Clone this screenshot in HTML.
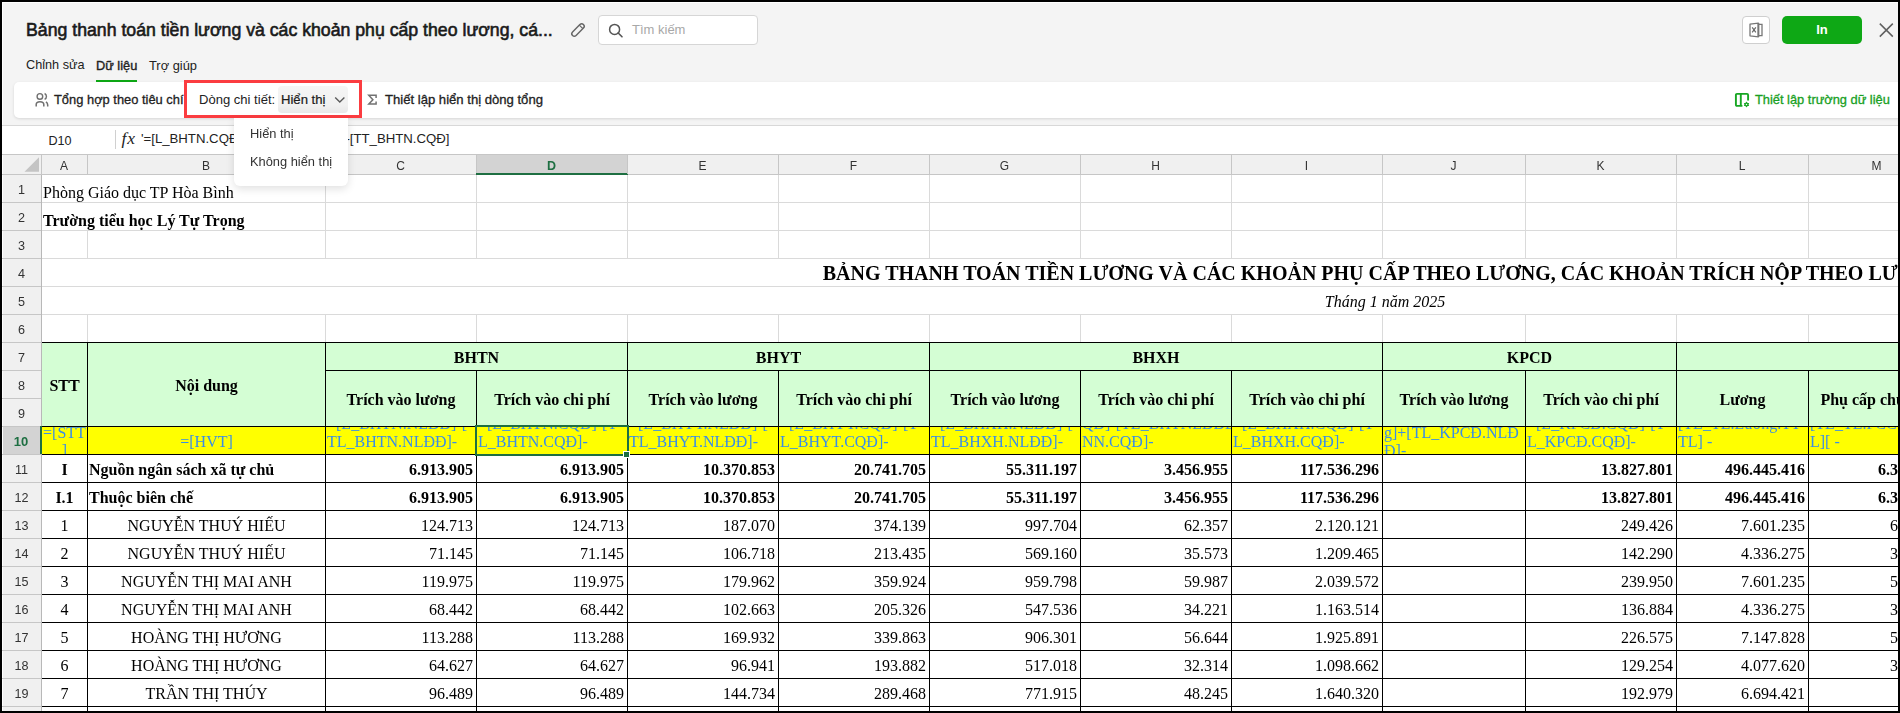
<domain style="display:none">Computer-Use</domain>
<!DOCTYPE html><html><head><meta charset="utf-8"><style>
*{margin:0;padding:0;box-sizing:border-box}
html,body{width:1900px;height:713px;overflow:hidden;background:#f4f4f4;position:relative}
div{position:absolute}
.ui{font-family:"Liberation Sans",sans-serif;white-space:nowrap}
.c{font-family:"Liberation Serif",serif;font-size:16px;color:#000;white-space:nowrap;overflow:hidden;display:flex;align-items:center;line-height:17px;padding-top:2px}
.b{font-weight:bold}
.ctr{justify-content:center}
.rt{justify-content:flex-end;padding-right:3px}
.lf{justify-content:flex-start;padding-left:1px}
.hd{font-family:"Liberation Sans",sans-serif;font-size:12px;color:#333;display:flex;align-items:center;justify-content:center;white-space:nowrap;line-height:14px}
.f10{font-family:"Liberation Serif",serif;font-size:16px;color:#3a8ee6;line-height:17.7px;overflow:hidden;display:flex;align-items:center;white-space:nowrap;padding-top:2px}
.f10 span{display:block}
.c,.f10,.hd{will-change:transform}
</style></head><body><div style="left:2px;top:2px;width:1896px;height:1px;background:#fff"></div>
<div style="left:2px;top:2px;width:1px;height:709px;background:#fff"></div>
<div class="ui" style="left:26px;top:18px;width:560px;height:24px;font-size:17.7px;color:#1a1a1a;-webkit-text-stroke:0.6px #1a1a1a;line-height:24px">Bảng thanh toán tiền lương và các khoản phụ cấp theo lương, cá...</div>
<svg style="position:absolute;left:560px;top:10px" width="30" height="30" viewBox="0 0 30 30"><g transform="rotate(-45 18 20)"><rect x="10.3" y="17.5" width="15.4" height="5" rx="2.5" fill="none" stroke="#666" stroke-width="1.45"/><path d="M22.4 17.5 V22.5" stroke="#666" stroke-width="1.2"/></g></svg>
<div style="left:598px;top:15px;width:160px;height:30px;background:#fff;border:1px solid #d6d6d6;border-radius:4px"></div>
<svg style="position:absolute;left:608px;top:22.5px" width="16" height="15" viewBox="0 0 16 15"><circle cx="6.6" cy="6.4" r="5" fill="none" stroke="#555" stroke-width="1.5"/><path d="M10.2 10 L14 13.8" stroke="#555" stroke-width="1.6" stroke-linecap="round"/></svg>
<div class="ui" style="left:632px;top:21px;width:100px;height:18px;font-size:13px;color:#a8a8a8;line-height:18px">Tìm kiếm</div>
<div style="left:1742px;top:16px;width:28px;height:28px;background:#fff;border:1px solid #cfcfcf;border-radius:4px"></div>
<svg style="position:absolute;left:1740px;top:14px" width="32" height="32" viewBox="0 0 32 32"><path d="M10 10.2 L18.4 9.2 L18.4 22.8 L10 21.8 Z" fill="none" stroke="#777" stroke-width="1.3" stroke-linejoin="round"/><path d="M18.4 9.2 V22.8" stroke="#777" stroke-width="1.9"/><path d="M18.4 10.4 H22 V21.6 H18.4" fill="none" stroke="#777" stroke-width="1.3"/><path d="M12.2 13.3 L15.8 18.3 M15.8 13.3 L12.2 18.3" stroke="#666" stroke-width="1.2"/></svg>
<div class="ui" style="left:1782px;top:16px;width:80px;height:28px;background:#0ea815;border-radius:5px;color:#fff;font-size:13px;font-weight:bold;display:flex;align-items:center;justify-content:center;padding-bottom:2px">In</div>
<svg style="position:absolute;left:1877.6px;top:22px" width="16" height="16" viewBox="0 0 16 16"><path d="M1.8 1.6 L14.8 14.6 M14.8 1.6 L1.8 14.6" stroke="#606060" stroke-width="1.5"/></svg>
<div class="ui" style="left:26px;top:57px;width:70px;height:17px;font-size:12.7px;color:#222;line-height:17px">Chỉnh sửa</div>
<div class="ui" style="left:96px;top:57px;width:45px;height:17px;font-size:12.8px;color:#222;line-height:17px;-webkit-text-stroke:0.35px #222">Dữ liệu</div>
<div class="ui" style="left:149px;top:57px;width:60px;height:17px;font-size:12.85px;color:#222;line-height:17px">Trợ giúp</div>
<div style="left:96px;top:80px;width:41px;height:2px;background:#0ea815"></div>
<div style="left:14px;top:82px;width:1890px;height:36px;background:#fff;border-radius:5px;box-shadow:0 1px 3px rgba(0,0,0,0.12)"></div>
<svg style="position:absolute;left:28px;top:86px" width="30" height="28" viewBox="0 0 30 28"><circle cx="11.9" cy="10.4" r="2.8" fill="none" stroke="#707070" stroke-width="1.4"/><path d="M8.2 20.6 V18.6 Q8.2 15.8 12 15.8 Q15.8 15.8 15.8 18.6 V20.6" fill="none" stroke="#707070" stroke-width="1.5"/><path d="M16.6 7.5 A3.2 3.2 0 0 1 16.6 13.3" fill="none" stroke="#707070" stroke-width="1.4"/><path d="M17.9 15.9 Q19.7 16.9 19.7 19 V20.6" fill="none" stroke="#707070" stroke-width="1.5"/></svg>
<div class="ui" style="left:54px;top:91px;width:135px;height:17px;font-size:12.9px;color:#222;line-height:17px;-webkit-text-stroke:0.3px #222">Tổng hợp theo tiêu chí</div>
<div style="left:278px;top:86px;width:70px;height:27px;background:linear-gradient(#f5f5f5,#f1f1f1 70%,#e8e8e8);border-radius:4px"></div>
<div class="ui" style="left:199px;top:91px;width:80px;height:17px;font-size:13.05px;color:#222;line-height:17px">Dòng chi tiết:</div>
<div class="ui" style="left:281px;top:91px;width:50px;height:17px;font-size:13.1px;color:#1a1a1a;line-height:17px;-webkit-text-stroke:0.2px #1a1a1a">Hiển thị</div>
<svg style="position:absolute;left:326px;top:88px" width="26" height="24" viewBox="0 0 26 24"><path d="M9.2 9.6 L13.8 14.1 L18.4 9.6" fill="none" stroke="#5a5a5a" stroke-width="1.35"/></svg>
<div style="left:184px;top:80px;width:178px;height:38px;border:3.8px solid #fb3c40"></div>
<svg style="position:absolute;left:362px;top:88px" width="30" height="24" viewBox="0 0 30 24"><path d="M14.1 9.9 V7.3 H6.8 L10.9 11.7 L6.8 16.1 H14.1 V13.5" fill="none" stroke="#727272" stroke-width="1.5" stroke-linejoin="miter"/></svg>
<div class="ui" style="left:385px;top:91px;width:170px;height:17px;font-size:13.1px;color:#222;line-height:17px;-webkit-text-stroke:0.3px #222">Thiết lập hiển thị dòng tổng</div>
<svg style="position:absolute;left:1730px;top:88px" width="26" height="24" viewBox="0 0 26 24"><path d="M12.4 17.9 H7 Q5.9 17.9 5.9 16.8 V7 Q5.9 5.9 7 5.9 H17 Q18.1 5.9 18.1 7 V12.4" fill="none" stroke="#17a623" stroke-width="1.9"/><path d="M10.8 5.9 V17.9" stroke="#17a623" stroke-width="1.9"/><path d="M16.5 13.4 L19.2 18.1 L13.8 18.1 Z M16.5 19.6 L19.2 14.9 L13.8 14.9 Z" fill="#17a623"/><circle cx="16.5" cy="16.5" r="2.1" fill="#17a623"/><circle cx="16.5" cy="16.5" r="0.75" fill="#fff"/></svg>
<div class="ui" style="left:1755px;top:91px;width:140px;height:17px;font-size:12.85px;color:#18a023;line-height:17px;-webkit-text-stroke:0.3px #18a023">Thiết lập trường dữ liệu</div>
<div style="left:3px;top:125px;width:1895px;height:30px;background:#fff"></div>
<div style="left:2px;top:125px;width:1896px;height:1px;background:#d8d8d8"></div>
<div class="ui" style="left:48.5px;top:134px;width:40px;height:15px;font-size:12.6px;color:#222;line-height:15px">D10</div>
<div style="left:115px;top:130px;width:1px;height:19px;background:#d0d0d0"></div>
<div style="left:121.5px;top:127.5px;width:22px;height:20px;font-family:'Liberation Serif',serif;font-style:italic;font-size:17.5px;color:#222;line-height:20px;letter-spacing:0.8px">fx</div>
<div class="ui" style="left:141px;top:130px;width:400px;height:17px;font-size:13.2px;color:#222;line-height:17px">'=[L_BHTN.CQĐ]-[TL_BHTN.CQĐ]-[TT_BHTN.CQĐ]</div>
<div style="left:3px;top:154px;width:1895px;height:21px;background:#f0f0f0"></div>
<div style="left:2px;top:154px;width:1896px;height:1px;background:#c6c6c6"></div>
<div style="left:2px;top:174px;width:1896px;height:1px;background:#c6c6c6"></div>
<svg style="position:absolute;left:24px;top:157px" width="16" height="15" viewBox="0 0 16 15"><path d="M0.5 14.7 L15 14.7 L15 0.3 Z" fill="#c4c4c4"/></svg>
<div class="hd" style="left:41px;top:155px;width:46px;height:19px;padding-top:2px">A</div>
<div style="left:87px;top:155px;width:1px;height:19px;background:#c6c6c6"></div>
<div class="hd" style="left:87px;top:155px;width:238px;height:19px;padding-top:2px">B</div>
<div style="left:325px;top:155px;width:1px;height:19px;background:#c6c6c6"></div>
<div class="hd" style="left:325px;top:155px;width:151px;height:19px;padding-top:2px">C</div>
<div style="left:476px;top:155px;width:1px;height:19px;background:#c6c6c6"></div>
<div style="left:477px;top:155px;width:150px;height:19px;background:#d3d3d3"></div>
<div style="left:476px;top:173px;width:152px;height:2px;background:#1e6f42"></div>
<div class="hd" style="left:476px;top:155px;width:151px;height:19px;font-weight:bold;color:#1e6f42;padding-top:2px;font-size:12.5px">D</div>
<div style="left:627px;top:155px;width:1px;height:19px;background:#c6c6c6"></div>
<div class="hd" style="left:627px;top:155px;width:151px;height:19px;padding-top:2px">E</div>
<div style="left:778px;top:155px;width:1px;height:19px;background:#c6c6c6"></div>
<div class="hd" style="left:778px;top:155px;width:151px;height:19px;padding-top:2px">F</div>
<div style="left:929px;top:155px;width:1px;height:19px;background:#c6c6c6"></div>
<div class="hd" style="left:929px;top:155px;width:151px;height:19px;padding-top:2px">G</div>
<div style="left:1080px;top:155px;width:1px;height:19px;background:#c6c6c6"></div>
<div class="hd" style="left:1080px;top:155px;width:151px;height:19px;padding-top:2px">H</div>
<div style="left:1231px;top:155px;width:1px;height:19px;background:#c6c6c6"></div>
<div class="hd" style="left:1231px;top:155px;width:151px;height:19px;padding-top:2px">I</div>
<div style="left:1382px;top:155px;width:1px;height:19px;background:#c6c6c6"></div>
<div class="hd" style="left:1382px;top:155px;width:143px;height:19px;padding-top:2px">J</div>
<div style="left:1525px;top:155px;width:1px;height:19px;background:#c6c6c6"></div>
<div class="hd" style="left:1525px;top:155px;width:151px;height:19px;padding-top:2px">K</div>
<div style="left:1676px;top:155px;width:1px;height:19px;background:#c6c6c6"></div>
<div class="hd" style="left:1676px;top:155px;width:132px;height:19px;padding-top:2px">L</div>
<div style="left:1808px;top:155px;width:1px;height:19px;background:#c6c6c6"></div>
<div class="hd" style="left:1808px;top:155px;width:137px;height:19px;padding-top:2px">M</div>
<div style="left:1945px;top:155px;width:1px;height:19px;background:#c6c6c6"></div>
<div style="left:41px;top:155px;width:1px;height:20px;background:#c6c6c6"></div>
<div style="left:42px;top:175px;width:1856px;height:540px;background:#fff"></div>
<div style="left:3px;top:175px;width:38px;height:540px;background:#f0f0f0"></div>
<div style="left:41px;top:175px;width:1px;height:538px;background:#b8b8b8"></div>
<div class="hd" style="left:2px;top:174px;width:39px;height:28px;padding-top:4px;font-size:12.6px">1</div>
<div style="left:2px;top:202px;width:39px;height:1px;background:#c6c6c6"></div>
<div class="hd" style="left:2px;top:202px;width:39px;height:28px;padding-top:4px;font-size:12.6px">2</div>
<div style="left:2px;top:230px;width:39px;height:1px;background:#c6c6c6"></div>
<div class="hd" style="left:2px;top:230px;width:39px;height:28px;padding-top:4px;font-size:12.6px">3</div>
<div style="left:2px;top:258px;width:39px;height:1px;background:#c6c6c6"></div>
<div class="hd" style="left:2px;top:258px;width:39px;height:28px;padding-top:4px;font-size:12.6px">4</div>
<div style="left:2px;top:286px;width:39px;height:1px;background:#c6c6c6"></div>
<div class="hd" style="left:2px;top:286px;width:39px;height:28px;padding-top:4px;font-size:12.6px">5</div>
<div style="left:2px;top:314px;width:39px;height:1px;background:#c6c6c6"></div>
<div class="hd" style="left:2px;top:314px;width:39px;height:28px;padding-top:4px;font-size:12.6px">6</div>
<div style="left:2px;top:342px;width:39px;height:1px;background:#c6c6c6"></div>
<div class="hd" style="left:2px;top:342px;width:39px;height:28px;padding-top:4px;font-size:12.6px">7</div>
<div style="left:2px;top:370px;width:39px;height:1px;background:#c6c6c6"></div>
<div class="hd" style="left:2px;top:370px;width:39px;height:28px;padding-top:4px;font-size:12.6px">8</div>
<div style="left:2px;top:398px;width:39px;height:1px;background:#c6c6c6"></div>
<div class="hd" style="left:2px;top:398px;width:39px;height:28px;padding-top:4px;font-size:12.6px">9</div>
<div style="left:2px;top:426px;width:39px;height:1px;background:#c6c6c6"></div>
<div style="left:3px;top:427px;width:37px;height:27px;background:#d3d3d3"></div>
<div class="hd" style="left:2px;top:426px;width:38px;height:28px;font-weight:bold;color:#1e6f42;font-size:13px;padding-top:4px">10</div>
<div style="left:40px;top:426px;width:2px;height:28px;background:#1e6f42"></div>
<div style="left:2px;top:454px;width:39px;height:1px;background:#c6c6c6"></div>
<div class="hd" style="left:2px;top:454px;width:39px;height:28px;padding-top:4px;font-size:12.6px">11</div>
<div style="left:2px;top:482px;width:39px;height:1px;background:#c6c6c6"></div>
<div class="hd" style="left:2px;top:482px;width:39px;height:28px;padding-top:4px;font-size:12.6px">12</div>
<div style="left:2px;top:510px;width:39px;height:1px;background:#c6c6c6"></div>
<div class="hd" style="left:2px;top:510px;width:39px;height:28px;padding-top:4px;font-size:12.6px">13</div>
<div style="left:2px;top:538px;width:39px;height:1px;background:#c6c6c6"></div>
<div class="hd" style="left:2px;top:538px;width:39px;height:28px;padding-top:4px;font-size:12.6px">14</div>
<div style="left:2px;top:566px;width:39px;height:1px;background:#c6c6c6"></div>
<div class="hd" style="left:2px;top:566px;width:39px;height:28px;padding-top:4px;font-size:12.6px">15</div>
<div style="left:2px;top:594px;width:39px;height:1px;background:#c6c6c6"></div>
<div class="hd" style="left:2px;top:594px;width:39px;height:28px;padding-top:4px;font-size:12.6px">16</div>
<div style="left:2px;top:622px;width:39px;height:1px;background:#c6c6c6"></div>
<div class="hd" style="left:2px;top:622px;width:39px;height:28px;padding-top:4px;font-size:12.6px">17</div>
<div style="left:2px;top:650px;width:39px;height:1px;background:#c6c6c6"></div>
<div class="hd" style="left:2px;top:650px;width:39px;height:28px;padding-top:4px;font-size:12.6px">18</div>
<div style="left:2px;top:678px;width:39px;height:1px;background:#c6c6c6"></div>
<div class="hd" style="left:2px;top:678px;width:39px;height:28px;padding-top:4px;font-size:12.6px">19</div>
<div style="left:2px;top:706px;width:39px;height:1px;background:#c6c6c6"></div>
<div class="hd" style="left:2px;top:706px;width:39px;height:28px;padding-top:4px;font-size:12.6px">20</div>
<div style="left:2px;top:734px;width:39px;height:1px;background:#c6c6c6"></div>
<div style="left:42px;top:202px;width:1856px;height:1px;background:#dadada"></div>
<div style="left:42px;top:230px;width:1856px;height:1px;background:#dadada"></div>
<div style="left:42px;top:258px;width:1856px;height:1px;background:#dadada"></div>
<div style="left:42px;top:286px;width:1856px;height:1px;background:#dadada"></div>
<div style="left:42px;top:314px;width:1856px;height:1px;background:#dadada"></div>
<div style="left:42px;top:342px;width:1856px;height:1px;background:#dadada"></div>
<div style="left:325px;top:175px;width:1px;height:27px;background:#dadada"></div>
<div style="left:476px;top:175px;width:1px;height:27px;background:#dadada"></div>
<div style="left:627px;top:175px;width:1px;height:27px;background:#dadada"></div>
<div style="left:778px;top:175px;width:1px;height:27px;background:#dadada"></div>
<div style="left:929px;top:175px;width:1px;height:27px;background:#dadada"></div>
<div style="left:1080px;top:175px;width:1px;height:27px;background:#dadada"></div>
<div style="left:1231px;top:175px;width:1px;height:27px;background:#dadada"></div>
<div style="left:1382px;top:175px;width:1px;height:27px;background:#dadada"></div>
<div style="left:1525px;top:175px;width:1px;height:27px;background:#dadada"></div>
<div style="left:1676px;top:175px;width:1px;height:27px;background:#dadada"></div>
<div style="left:1808px;top:175px;width:1px;height:27px;background:#dadada"></div>
<div style="left:325px;top:203px;width:1px;height:27px;background:#dadada"></div>
<div style="left:476px;top:203px;width:1px;height:27px;background:#dadada"></div>
<div style="left:627px;top:203px;width:1px;height:27px;background:#dadada"></div>
<div style="left:778px;top:203px;width:1px;height:27px;background:#dadada"></div>
<div style="left:929px;top:203px;width:1px;height:27px;background:#dadada"></div>
<div style="left:1080px;top:203px;width:1px;height:27px;background:#dadada"></div>
<div style="left:1231px;top:203px;width:1px;height:27px;background:#dadada"></div>
<div style="left:1382px;top:203px;width:1px;height:27px;background:#dadada"></div>
<div style="left:1525px;top:203px;width:1px;height:27px;background:#dadada"></div>
<div style="left:1676px;top:203px;width:1px;height:27px;background:#dadada"></div>
<div style="left:1808px;top:203px;width:1px;height:27px;background:#dadada"></div>
<div style="left:87px;top:231px;width:1px;height:27px;background:#dadada"></div>
<div style="left:325px;top:231px;width:1px;height:27px;background:#dadada"></div>
<div style="left:476px;top:231px;width:1px;height:27px;background:#dadada"></div>
<div style="left:627px;top:231px;width:1px;height:27px;background:#dadada"></div>
<div style="left:778px;top:231px;width:1px;height:27px;background:#dadada"></div>
<div style="left:929px;top:231px;width:1px;height:27px;background:#dadada"></div>
<div style="left:1080px;top:231px;width:1px;height:27px;background:#dadada"></div>
<div style="left:1231px;top:231px;width:1px;height:27px;background:#dadada"></div>
<div style="left:1382px;top:231px;width:1px;height:27px;background:#dadada"></div>
<div style="left:1525px;top:231px;width:1px;height:27px;background:#dadada"></div>
<div style="left:1676px;top:231px;width:1px;height:27px;background:#dadada"></div>
<div style="left:1808px;top:231px;width:1px;height:27px;background:#dadada"></div>
<div style="left:87px;top:315px;width:1px;height:27px;background:#dadada"></div>
<div style="left:325px;top:315px;width:1px;height:27px;background:#dadada"></div>
<div style="left:476px;top:315px;width:1px;height:27px;background:#dadada"></div>
<div style="left:627px;top:315px;width:1px;height:27px;background:#dadada"></div>
<div style="left:778px;top:315px;width:1px;height:27px;background:#dadada"></div>
<div style="left:929px;top:315px;width:1px;height:27px;background:#dadada"></div>
<div style="left:1080px;top:315px;width:1px;height:27px;background:#dadada"></div>
<div style="left:1231px;top:315px;width:1px;height:27px;background:#dadada"></div>
<div style="left:1382px;top:315px;width:1px;height:27px;background:#dadada"></div>
<div style="left:1525px;top:315px;width:1px;height:27px;background:#dadada"></div>
<div style="left:1676px;top:315px;width:1px;height:27px;background:#dadada"></div>
<div style="left:1808px;top:315px;width:1px;height:27px;background:#dadada"></div>
<div style="left:42px;top:342px;width:1856px;height:84px;background:#d4fed4"></div>
<div style="left:42px;top:426px;width:1856px;height:28px;background:#ffff00"></div>
<div class="c lf" style="left:42px;top:175px;width:300px;height:27px;align-items:flex-end;padding-top:0;padding-bottom:0.8px;overflow:visible">Phòng Giáo dục TP Hòa Bình</div>
<div class="c lf b" style="left:42px;top:203px;width:300px;height:27px;align-items:flex-end;padding-top:0;padding-bottom:0.8px;overflow:visible">Trường tiểu học Lý Tự Trọng</div>
<div class="c ctr b" style="left:198px;top:259px;width:2370px;height:27px;font-size:20px">BẢNG THANH TOÁN TIỀN LƯƠNG VÀ CÁC KHOẢN PHỤ CẤP THEO LƯƠNG, CÁC KHOẢN TRÍCH NỘP THEO LƯƠNG</div>
<div class="c ctr" style="left:200px;top:287px;width:2370px;height:27px;font-style:italic">Tháng 1 năm 2025</div>
<div class="c ctr b" style="left:42px;top:343px;width:45px;height:83px;">STT</div>
<div class="c ctr b" style="left:88px;top:343px;width:237px;height:83px;">Nội dung</div>
<div class="c ctr b" style="left:326px;top:343px;width:301px;height:27px;">BHTN</div>
<div class="c ctr b" style="left:628px;top:343px;width:301px;height:27px;">BHYT</div>
<div class="c ctr b" style="left:930px;top:343px;width:452px;height:27px;">BHXH</div>
<div class="c ctr b" style="left:1383px;top:343px;width:293px;height:27px;">KPCD</div>
<div class="c ctr b" style="left:326px;top:371px;width:150px;height:55px;">Trích vào lương</div>
<div class="c ctr b" style="left:477px;top:371px;width:150px;height:55px;">Trích vào chi phí</div>
<div class="c ctr b" style="left:628px;top:371px;width:150px;height:55px;">Trích vào lương</div>
<div class="c ctr b" style="left:779px;top:371px;width:150px;height:55px;">Trích vào chi phí</div>
<div class="c ctr b" style="left:930px;top:371px;width:150px;height:55px;">Trích vào lương</div>
<div class="c ctr b" style="left:1081px;top:371px;width:150px;height:55px;">Trích vào chi phí</div>
<div class="c ctr b" style="left:1232px;top:371px;width:150px;height:55px;">Trích vào chi phí</div>
<div class="c ctr b" style="left:1383px;top:371px;width:142px;height:55px;">Trích vào lương</div>
<div class="c ctr b" style="left:1526px;top:371px;width:150px;height:55px;">Trích vào chi phí</div>
<div class="c ctr b" style="left:1677px;top:371px;width:131px;height:55px;">Lương</div>
<div class="c ctr b" style="left:1809px;top:371px;width:136px;height:55px;">Phụ cấp chức vụ</div>
<div class="f10" style="left:42px;top:427px;width:45px;height:27px;text-align:center"><div style="position:relative;width:100%;"><span>=[STT</span><span>]</span></div></div>
<div class="f10" style="left:88px;top:427px;width:237px;height:27px;text-align:center"><div style="position:relative;width:100%;"><span>=[HVT]</span></div></div>
<div class="f10" style="left:326px;top:427px;width:150px;height:27px;text-align:left"><div style="position:relative;width:100%;padding-left:1px"><span>=[L_BHTN.NLĐĐ]-[</span><span>TL_BHTN.NLĐĐ]-</span><span>&nbsp;</span></div></div>
<div class="f10" style="left:477px;top:427px;width:150px;height:27px;text-align:left"><div style="position:relative;width:100%;padding-left:1px"><span>=[L_BHTN.CQĐ]-[T</span><span>L_BHTN.CQĐ]-</span><span>&nbsp;</span></div></div>
<div class="f10" style="left:628px;top:427px;width:150px;height:27px;text-align:left"><div style="position:relative;width:100%;padding-left:1px"><span>=[L_BHYT.NLĐĐ]-[</span><span>TL_BHYT.NLĐĐ]-</span><span>&nbsp;</span></div></div>
<div class="f10" style="left:779px;top:427px;width:150px;height:27px;text-align:left"><div style="position:relative;width:100%;padding-left:1px"><span>=[L_BHYT.CQĐ]-[T</span><span>L_BHYT.CQĐ]-</span><span>&nbsp;</span></div></div>
<div class="f10" style="left:930px;top:427px;width:150px;height:27px;text-align:left"><div style="position:relative;width:100%;padding-left:1px"><span>=[L_BHXH.NLĐĐ]-[</span><span>TL_BHXH.NLĐĐ]-</span><span>&nbsp;</span></div></div>
<div class="f10" style="left:1081px;top:427px;width:150px;height:27px;text-align:left"><div style="position:relative;width:100%;padding-left:1px"><span>QĐ]-[TL_BHTNLĐĐB</span><span>NN.CQĐ]-</span><span>&nbsp;</span></div></div>
<div class="f10" style="left:1232px;top:427px;width:150px;height:27px;text-align:left"><div style="position:relative;width:100%;padding-left:1px"><span>=[L_BHXH.CQĐ]-[T</span><span>L_BHXH.CQĐ]-</span><span>&nbsp;</span></div></div>
<div class="f10" style="left:1383px;top:427px;width:142px;height:27px;text-align:left"><div style="position:relative;width:100%;padding-left:1px"><span>=[L_KPCĐ.NLĐĐ]-[Lươn</span><span>g]+[TL_KPCĐ.NLĐ</span><span>Đ]-</span><span>&nbsp;</span></div></div>
<div class="f10" style="left:1526px;top:427px;width:150px;height:27px;text-align:left"><div style="position:relative;width:100%;padding-left:1px"><span>=[L_KPCĐ.CQĐ]-[T</span><span>L_KPCĐ.CQĐ]-</span><span>&nbsp;</span></div></div>
<div class="f10" style="left:1677px;top:427px;width:131px;height:27px;text-align:left"><div style="position:relative;width:100%;padding-left:1px"><span>[TL_TL.Lương.TT</span><span>TL] -</span><span>&nbsp;</span></div></div>
<div class="f10" style="left:1809px;top:427px;width:136px;height:27px;text-align:left"><div style="position:relative;width:100%;padding-left:1px"><span>[TL_TL.PCCV</span><span>L][ -</span><span>&nbsp;</span></div></div>
<div class="c ctr b" style="left:42px;top:455px;width:45px;height:27px;">I</div>
<div class="c lf b" style="left:88px;top:455px;width:237px;height:27px;">Nguồn ngân sách xã tự chủ</div>
<div class="c rt b" style="left:326px;top:455px;width:150px;height:27px;">6.913.905</div>
<div class="c rt b" style="left:477px;top:455px;width:150px;height:27px;">6.913.905</div>
<div class="c rt b" style="left:628px;top:455px;width:150px;height:27px;">10.370.853</div>
<div class="c rt b" style="left:779px;top:455px;width:150px;height:27px;">20.741.705</div>
<div class="c rt b" style="left:930px;top:455px;width:150px;height:27px;">55.311.197</div>
<div class="c rt b" style="left:1081px;top:455px;width:150px;height:27px;">3.456.955</div>
<div class="c rt b" style="left:1232px;top:455px;width:150px;height:27px;">117.536.296</div>
<div class="c rt b" style="left:1383px;top:455px;width:142px;height:27px;"></div>
<div class="c rt b" style="left:1526px;top:455px;width:150px;height:27px;">13.827.801</div>
<div class="c rt b" style="left:1677px;top:455px;width:131px;height:27px;">496.445.416</div>
<div class="c rt b" style="left:1809px;top:455px;width:136px;height:27px;">6.312.345</div>
<div class="c ctr b" style="left:42px;top:483px;width:45px;height:27px;">I.1</div>
<div class="c lf b" style="left:88px;top:483px;width:237px;height:27px;">Thuộc biên chế</div>
<div class="c rt b" style="left:326px;top:483px;width:150px;height:27px;">6.913.905</div>
<div class="c rt b" style="left:477px;top:483px;width:150px;height:27px;">6.913.905</div>
<div class="c rt b" style="left:628px;top:483px;width:150px;height:27px;">10.370.853</div>
<div class="c rt b" style="left:779px;top:483px;width:150px;height:27px;">20.741.705</div>
<div class="c rt b" style="left:930px;top:483px;width:150px;height:27px;">55.311.197</div>
<div class="c rt b" style="left:1081px;top:483px;width:150px;height:27px;">3.456.955</div>
<div class="c rt b" style="left:1232px;top:483px;width:150px;height:27px;">117.536.296</div>
<div class="c rt b" style="left:1383px;top:483px;width:142px;height:27px;"></div>
<div class="c rt b" style="left:1526px;top:483px;width:150px;height:27px;">13.827.801</div>
<div class="c rt b" style="left:1677px;top:483px;width:131px;height:27px;">496.445.416</div>
<div class="c rt b" style="left:1809px;top:483px;width:136px;height:27px;">6.312.345</div>
<div class="c ctr" style="left:42px;top:511px;width:45px;height:27px;">1</div>
<div class="c ctr" style="left:88px;top:511px;width:237px;height:27px;">NGUYỄN THUÝ HIẾU</div>
<div class="c rt" style="left:326px;top:511px;width:150px;height:27px;">124.713</div>
<div class="c rt" style="left:477px;top:511px;width:150px;height:27px;">124.713</div>
<div class="c rt" style="left:628px;top:511px;width:150px;height:27px;">187.070</div>
<div class="c rt" style="left:779px;top:511px;width:150px;height:27px;">374.139</div>
<div class="c rt" style="left:930px;top:511px;width:150px;height:27px;">997.704</div>
<div class="c rt" style="left:1081px;top:511px;width:150px;height:27px;">62.357</div>
<div class="c rt" style="left:1232px;top:511px;width:150px;height:27px;">2.120.121</div>
<div class="c rt" style="left:1383px;top:511px;width:142px;height:27px;"></div>
<div class="c rt" style="left:1526px;top:511px;width:150px;height:27px;">249.426</div>
<div class="c rt" style="left:1677px;top:511px;width:131px;height:27px;">7.601.235</div>
<div class="c rt" style="left:1809px;top:511px;width:136px;height:27px;">612.345</div>
<div class="c ctr" style="left:42px;top:539px;width:45px;height:27px;">2</div>
<div class="c ctr" style="left:88px;top:539px;width:237px;height:27px;">NGUYỄN THUÝ HIẾU</div>
<div class="c rt" style="left:326px;top:539px;width:150px;height:27px;">71.145</div>
<div class="c rt" style="left:477px;top:539px;width:150px;height:27px;">71.145</div>
<div class="c rt" style="left:628px;top:539px;width:150px;height:27px;">106.718</div>
<div class="c rt" style="left:779px;top:539px;width:150px;height:27px;">213.435</div>
<div class="c rt" style="left:930px;top:539px;width:150px;height:27px;">569.160</div>
<div class="c rt" style="left:1081px;top:539px;width:150px;height:27px;">35.573</div>
<div class="c rt" style="left:1232px;top:539px;width:150px;height:27px;">1.209.465</div>
<div class="c rt" style="left:1383px;top:539px;width:142px;height:27px;"></div>
<div class="c rt" style="left:1526px;top:539px;width:150px;height:27px;">142.290</div>
<div class="c rt" style="left:1677px;top:539px;width:131px;height:27px;">4.336.275</div>
<div class="c rt" style="left:1809px;top:539px;width:136px;height:27px;">312.345</div>
<div class="c ctr" style="left:42px;top:567px;width:45px;height:27px;">3</div>
<div class="c ctr" style="left:88px;top:567px;width:237px;height:27px;">NGUYỄN THỊ MAI ANH</div>
<div class="c rt" style="left:326px;top:567px;width:150px;height:27px;">119.975</div>
<div class="c rt" style="left:477px;top:567px;width:150px;height:27px;">119.975</div>
<div class="c rt" style="left:628px;top:567px;width:150px;height:27px;">179.962</div>
<div class="c rt" style="left:779px;top:567px;width:150px;height:27px;">359.924</div>
<div class="c rt" style="left:930px;top:567px;width:150px;height:27px;">959.798</div>
<div class="c rt" style="left:1081px;top:567px;width:150px;height:27px;">59.987</div>
<div class="c rt" style="left:1232px;top:567px;width:150px;height:27px;">2.039.572</div>
<div class="c rt" style="left:1383px;top:567px;width:142px;height:27px;"></div>
<div class="c rt" style="left:1526px;top:567px;width:150px;height:27px;">239.950</div>
<div class="c rt" style="left:1677px;top:567px;width:131px;height:27px;">7.601.235</div>
<div class="c rt" style="left:1809px;top:567px;width:136px;height:27px;">512.345</div>
<div class="c ctr" style="left:42px;top:595px;width:45px;height:27px;">4</div>
<div class="c ctr" style="left:88px;top:595px;width:237px;height:27px;">NGUYỄN THỊ MAI ANH</div>
<div class="c rt" style="left:326px;top:595px;width:150px;height:27px;">68.442</div>
<div class="c rt" style="left:477px;top:595px;width:150px;height:27px;">68.442</div>
<div class="c rt" style="left:628px;top:595px;width:150px;height:27px;">102.663</div>
<div class="c rt" style="left:779px;top:595px;width:150px;height:27px;">205.326</div>
<div class="c rt" style="left:930px;top:595px;width:150px;height:27px;">547.536</div>
<div class="c rt" style="left:1081px;top:595px;width:150px;height:27px;">34.221</div>
<div class="c rt" style="left:1232px;top:595px;width:150px;height:27px;">1.163.514</div>
<div class="c rt" style="left:1383px;top:595px;width:142px;height:27px;"></div>
<div class="c rt" style="left:1526px;top:595px;width:150px;height:27px;">136.884</div>
<div class="c rt" style="left:1677px;top:595px;width:131px;height:27px;">4.336.275</div>
<div class="c rt" style="left:1809px;top:595px;width:136px;height:27px;">312.345</div>
<div class="c ctr" style="left:42px;top:623px;width:45px;height:27px;">5</div>
<div class="c ctr" style="left:88px;top:623px;width:237px;height:27px;">HOÀNG THỊ HƯƠNG</div>
<div class="c rt" style="left:326px;top:623px;width:150px;height:27px;">113.288</div>
<div class="c rt" style="left:477px;top:623px;width:150px;height:27px;">113.288</div>
<div class="c rt" style="left:628px;top:623px;width:150px;height:27px;">169.932</div>
<div class="c rt" style="left:779px;top:623px;width:150px;height:27px;">339.863</div>
<div class="c rt" style="left:930px;top:623px;width:150px;height:27px;">906.301</div>
<div class="c rt" style="left:1081px;top:623px;width:150px;height:27px;">56.644</div>
<div class="c rt" style="left:1232px;top:623px;width:150px;height:27px;">1.925.891</div>
<div class="c rt" style="left:1383px;top:623px;width:142px;height:27px;"></div>
<div class="c rt" style="left:1526px;top:623px;width:150px;height:27px;">226.575</div>
<div class="c rt" style="left:1677px;top:623px;width:131px;height:27px;">7.147.828</div>
<div class="c rt" style="left:1809px;top:623px;width:136px;height:27px;">512.345</div>
<div class="c ctr" style="left:42px;top:651px;width:45px;height:27px;">6</div>
<div class="c ctr" style="left:88px;top:651px;width:237px;height:27px;">HOÀNG THỊ HƯƠNG</div>
<div class="c rt" style="left:326px;top:651px;width:150px;height:27px;">64.627</div>
<div class="c rt" style="left:477px;top:651px;width:150px;height:27px;">64.627</div>
<div class="c rt" style="left:628px;top:651px;width:150px;height:27px;">96.941</div>
<div class="c rt" style="left:779px;top:651px;width:150px;height:27px;">193.882</div>
<div class="c rt" style="left:930px;top:651px;width:150px;height:27px;">517.018</div>
<div class="c rt" style="left:1081px;top:651px;width:150px;height:27px;">32.314</div>
<div class="c rt" style="left:1232px;top:651px;width:150px;height:27px;">1.098.662</div>
<div class="c rt" style="left:1383px;top:651px;width:142px;height:27px;"></div>
<div class="c rt" style="left:1526px;top:651px;width:150px;height:27px;">129.254</div>
<div class="c rt" style="left:1677px;top:651px;width:131px;height:27px;">4.077.620</div>
<div class="c rt" style="left:1809px;top:651px;width:136px;height:27px;">312.345</div>
<div class="c ctr" style="left:42px;top:679px;width:45px;height:27px;">7</div>
<div class="c ctr" style="left:88px;top:679px;width:237px;height:27px;">TRẦN THỊ THÚY</div>
<div class="c rt" style="left:326px;top:679px;width:150px;height:27px;">96.489</div>
<div class="c rt" style="left:477px;top:679px;width:150px;height:27px;">96.489</div>
<div class="c rt" style="left:628px;top:679px;width:150px;height:27px;">144.734</div>
<div class="c rt" style="left:779px;top:679px;width:150px;height:27px;">289.468</div>
<div class="c rt" style="left:930px;top:679px;width:150px;height:27px;">771.915</div>
<div class="c rt" style="left:1081px;top:679px;width:150px;height:27px;">48.245</div>
<div class="c rt" style="left:1232px;top:679px;width:150px;height:27px;">1.640.320</div>
<div class="c rt" style="left:1383px;top:679px;width:142px;height:27px;"></div>
<div class="c rt" style="left:1526px;top:679px;width:150px;height:27px;">192.979</div>
<div class="c rt" style="left:1677px;top:679px;width:131px;height:27px;">6.694.421</div>
<div class="c rt" style="left:1809px;top:679px;width:136px;height:27px;"></div>
<div style="left:42px;top:342px;width:1856px;height:1px;background:#000"></div>
<div style="left:325px;top:370px;width:1573px;height:1px;background:#000"></div>
<div style="left:42px;top:426px;width:1856px;height:1px;background:#000"></div>
<div style="left:42px;top:454px;width:1856px;height:1px;background:#000"></div>
<div style="left:42px;top:482px;width:1856px;height:1px;background:#000"></div>
<div style="left:42px;top:510px;width:1856px;height:1px;background:#000"></div>
<div style="left:42px;top:538px;width:1856px;height:1px;background:#000"></div>
<div style="left:42px;top:566px;width:1856px;height:1px;background:#000"></div>
<div style="left:42px;top:594px;width:1856px;height:1px;background:#000"></div>
<div style="left:42px;top:622px;width:1856px;height:1px;background:#000"></div>
<div style="left:42px;top:650px;width:1856px;height:1px;background:#000"></div>
<div style="left:42px;top:678px;width:1856px;height:1px;background:#000"></div>
<div style="left:42px;top:706px;width:1856px;height:1px;background:#000"></div>
<div style="left:42px;top:734px;width:1856px;height:1px;background:#000"></div>
<div style="left:87px;top:342px;width:1px;height:371px;background:#000"></div>
<div style="left:325px;top:342px;width:1px;height:371px;background:#000"></div>
<div style="left:476px;top:370px;width:1px;height:343px;background:#000"></div>
<div style="left:627px;top:342px;width:1px;height:371px;background:#000"></div>
<div style="left:778px;top:370px;width:1px;height:343px;background:#000"></div>
<div style="left:929px;top:342px;width:1px;height:371px;background:#000"></div>
<div style="left:1080px;top:370px;width:1px;height:343px;background:#000"></div>
<div style="left:1231px;top:370px;width:1px;height:343px;background:#000"></div>
<div style="left:1382px;top:342px;width:1px;height:371px;background:#000"></div>
<div style="left:1525px;top:370px;width:1px;height:343px;background:#000"></div>
<div style="left:1676px;top:342px;width:1px;height:371px;background:#000"></div>
<div style="left:1808px;top:370px;width:1px;height:343px;background:#000"></div>
<div style="left:475px;top:425px;width:154px;height:31px;border:2px solid #1e6f42"></div>
<div style="left:623px;top:451px;width:7px;height:7px;background:#fff"></div>
<div style="left:624px;top:452px;width:5px;height:5px;background:#1e6f42"></div>
<div style="left:234px;top:118px;width:114px;height:68px;background:#fff;border-radius:0 0 6px 6px;box-shadow:0 3px 8px rgba(0,0,0,0.12)"></div>
<div class="ui" style="left:250px;top:125px;width:80px;height:17px;font-size:12.85px;color:#333;line-height:17px">Hiển thị</div>
<div class="ui" style="left:250px;top:153px;width:95px;height:17px;font-size:12.85px;color:#333;line-height:17px">Không hiển thị</div>
<div style="left:0px;top:0px;width:1900px;height:2px;background:#000"></div>
<div style="left:0px;top:0px;width:2px;height:713px;background:#000"></div>
<div style="left:1898px;top:0px;width:2px;height:713px;background:#000"></div>
<div style="left:0px;top:711px;width:1900px;height:2px;background:#000"></div></body></html>
